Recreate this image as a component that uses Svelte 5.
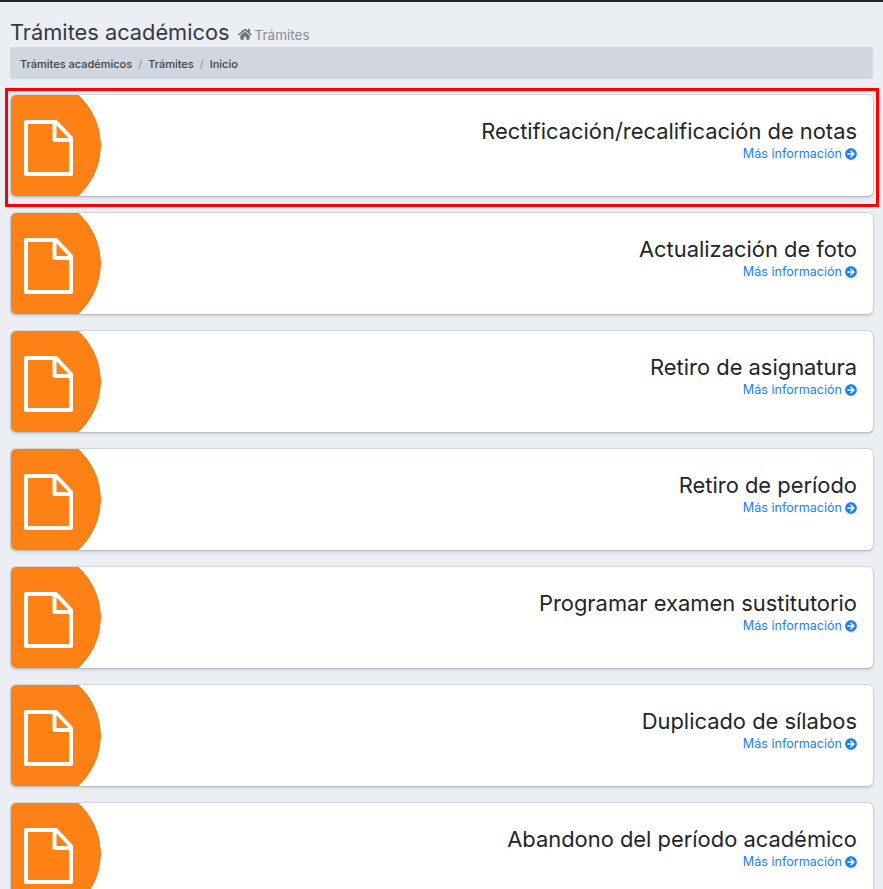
<script>
  const tramites = [
    "Rectificación/recalificación de notas",
    "Actualización de foto",
    "Retiro de asignatura",
    "Retiro de período",
    "Programar examen sustitutorio",
    "Duplicado de sílabos",
    "Abandono del período académico"
  ];
</script>

<div class="page">
  <header class="title">
    <h1>Trámites académicos</h1>
    <small>
      <svg class="home" viewBox="0 0 576 512" aria-hidden="true"><path d="M280.37 148.26L96 300.11V464a16 16 0 0 0 16 16l112.06-.29a16 16 0 0 0 15.92-16V368a16 16 0 0 1 16-16h64a16 16 0 0 1 16 16v95.64a16 16 0 0 0 16 16.05L464 480a16 16 0 0 0 16-16V300L295.67 148.26a12.19 12.19 0 0 0-15.3 0zM571.6 251.47L488 182.56V44.05a12 12 0 0 0-12-12h-56a12 12 0 0 0-12 12v72.61L318.47 43a48 48 0 0 0-61 0L4.34 251.47a12 12 0 0 0-1.6 16.9l25.5 31A12 12 0 0 0 45.15 301l235.22-193.74a12.19 12.19 0 0 1 15.3 0L530.9 301a12 12 0 0 0 16.9-1.6l25.5-31a12 12 0 0 0-1.7-17.93z"/></svg>
      Trámites
    </small>
  </header>

  <nav class="crumbs">
    <span>Trámites académicos</span>
    <i>/</i>
    <span>Trámites</span>
    <i>/</i>
    <span>Inicio</span>
  </nav>

  <div class="list">
    {#each tramites as nombre, i}
      <article class="card">
        <div class="badge">
          <svg viewBox="0 0 49 56" aria-hidden="true">
            <path d="M2 2H32L47 18V54H2Z M30.5 2V20H47" />
          </svg>
        </div>
        <div class="body">
          <h3>{nombre}</h3>
          <a href="#top">
            Más información
            <svg viewBox="0 0 512 512" aria-hidden="true"><path d="M256 8c137 0 248 111 248 248S393 504 256 504 8 393 8 256 119 8 256 8zm-28.9 143.6l75.5 72.4H120c-13.3 0-24 10.7-24 24v16c0 13.3 10.7 24 24 24h182.6l-75.5 72.4c-9.7 9.3-9.9 24.8-.4 34.3l11 10.9c9.4 9.4 24.6 9.4 33.9 0L404.3 273c9.4-9.4 9.4-24.6 0-33.9L271.6 106.3c-9.4-9.4-24.6-9.4-33.9 0l-11 10.9c-9.3 9.6-9.1 25.1.4 34.4z"/></svg>
          </a>
        </div>
        {#if i === 0}
          <div class="marker"></div>
        {/if}
      </article>
    {/each}
  </div>
</div>

<style>
  :global(body) {
    background: #ebeef3;
    overflow: hidden;
  }

  .page {
    height: 100vh;
    overflow: hidden;
    box-sizing: border-box;
    border-top: 2px solid #1f2429;
    padding: 16px 10px 0 10px;
    font-family: Inter, "Open Sans", sans-serif;
    color: #212529;
  }

  .title {
    display: flex;
    align-items: baseline;
    gap: 8px;
    height: 29px;
  }

  h1 {
    margin: 0;
    font-size: 21.8px;
    font-weight: 400;
    line-height: 29px;
    color: #343a40;
  }

  small {
    font-size: 13.5px;
    color: #868e96;
    display: flex;
    align-items: baseline;
    gap: 3px;
  }

  .home {
    width: 14px;
    height: 12.5px;
    fill: #6c757d;
  }

  .crumbs {
    height: 32px;
    display: flex;
    align-items: center;
    gap: 6px;
    padding: 1px 10px 0;
    box-sizing: border-box;
    background: #d2d6de;
    border-radius: 3px;
    font-size: 11px;
    font-weight: 500;
    color: #3d4248;
  }

  .crumbs i {
    font-style: normal;
    font-weight: 400;
    color: #8b9197;
  }

  .list {
    display: flex;
    flex-direction: column;
    gap: 17px;
    margin-top: 16px;
    margin-left: 1px;
  }

  .card {
    position: relative;
    display: flex;
    height: 101px;
    box-sizing: border-box;
    flex: none;
    background: #fff;
    border-radius: 5px;
    box-shadow: 0 0 0 1px rgba(60, 75, 100, 0.14), 0 2px 3px rgba(0, 0, 0, 0.14);
  }

  .badge {
    flex: none;
    width: 90px;
    display: flex;
    align-items: center;
    padding-left: 13px;
    box-sizing: border-box;
    border-radius: 5px 0 0 5px;
    background: radial-gradient(circle 68px at 22px 50%, #fe8115 65.5px, #f48020 66px, #f48020 67.5px, transparent 68px);
  }

  .badge svg {
    width: 49px;
    height: 56px;
    margin-top: 5px;
    fill: none;
    stroke: #fff;
    stroke-width: 4;
    stroke-linejoin: round;
  }

  .body {
    flex: 1;
    text-align: right;
    padding: 22px 16px 0 0;
  }

  h3 {
    margin: 0;
    font-size: 21.9px;
    font-weight: 400;
    line-height: 29px;
    color: #212529;
  }

  a {
    display: flex;
    justify-content: flex-end;
    align-items: center;
    gap: 3px;
    font-size: 12.6px;
    line-height: 16px;
    color: #1a7ffb;
    text-decoration: none;
  }

  a svg {
    width: 12px;
    height: 12px;
    fill: #1a7ffb;
  }

  /* red annotation box drawn over the first card */
  .marker {
    position: absolute;
    top: -7px;
    left: -6px;
    right: -6px;
    bottom: -11px;
    border: 3px solid #f00;
    pointer-events: none;
  }
</style>
